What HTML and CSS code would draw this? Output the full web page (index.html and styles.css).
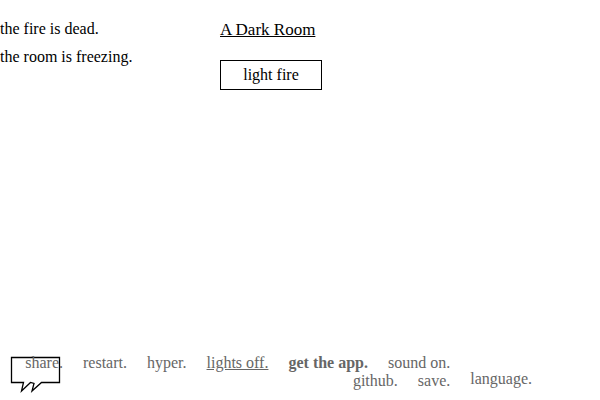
FILE: index.html
```html
<!DOCTYPE html>
<html lang="en">
<head>
    <meta charset="UTF-8">
    <meta name="viewport" content="width=device-width, initial-scale=1.0">
    <title>A Dark Room</title>
    <link rel="stylesheet" href="styles.css">
</head>
<body>
    <main class="wrapper">
        <div class="notifications">
            <p>the fire is dead.</p>
            <p>the room is freezing.</p>
        </div>
        <section class="room">
            <header class="header">
                <a class="header-button" href="#room">A Dark Room</a>
            </header>
            <button class="button" type="button">light fire</button>
        </section>
    </main>

    <footer class="footer">
        <svg class="bubble" width="52" height="38" viewBox="0 0 52 38" aria-hidden="true">
            <path d="M1.500 1.500H49.500V26.500H31.500L22 35L24 27.500L20.500 26.500L11.500 35L13.500 26.500H1.500Z"/>
        </svg>
        <nav class="menu">
            <button type="button">share.</button>
            <button type="button">restart.</button>
            <button type="button">hyper.</button>
            <button class="lights-off" type="button">lights off.</button>
            <a class="app-store" href="#app">get the app.</a>
            <button type="button">sound on.</button>
            <a href="#github">github.</a>
            <button type="button">save.</button>
        </nav>
        <button class="language" type="button">language.</button>
    </footer>
</body>
</html>
```

FILE: styles.css
```css
* {
    margin: 0;
    padding: 0;
    box-sizing: border-box;
}

body {
    display: flex;
    flex-direction: column;
    min-height: 100vh;
    background: #fff;
    color: #000;
    font-family: "Liberation Serif", "Times New Roman", Times, serif;
    font-size: 16px;
    line-height: 18px;
}

button,
a {
    border: none;
    background: none;
    color: inherit;
    font: inherit;
    text-decoration: none;
    cursor: pointer;
}

.wrapper {
    flex: 1;
    display: grid;
    grid-template-columns: 220px 1fr;
    padding-top: 20px;
}

.notifications p {
    margin-bottom: 10px;
}

.header {
    margin-bottom: 20px;
    font-size: 17px;
    line-height: 20px;
}

.header-button {
    text-decoration: underline;
}

.button {
    width: 102px;
    padding: 5px 10px;
    border: 1px solid #000;
}

.footer {
    position: relative;
    display: flex;
    align-items: flex-end;
    gap: 20px;
    padding: 0 68px 10px 0;
    color: #666;
}

.menu {
    flex: 1;
    display: flex;
    flex-wrap: wrap;
    justify-content: flex-end;
    column-gap: 20px;
}

.menu .lights-off {
    text-decoration: underline;
}

.menu .app-store {
    font-weight: bold;
}

.language {
    margin-bottom: 2px;
}

/* speech bubble sits behind the first menu item */
.bubble {
    position: absolute;
    left: 10px;
    bottom: 6px;
    z-index: -1;
    fill: none;
    stroke: #000;
    stroke-width: 1.3;
}
```
